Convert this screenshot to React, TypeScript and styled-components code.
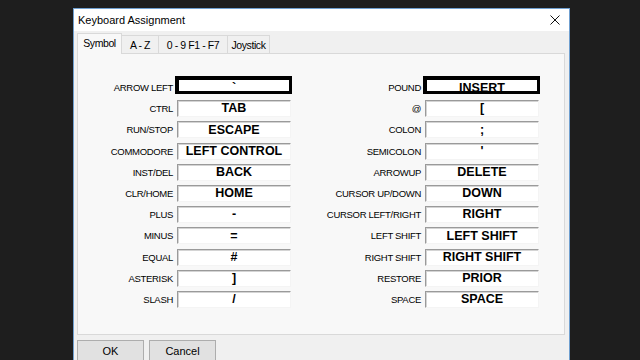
import React from 'react';
import styled, { createGlobalStyle } from 'styled-components';

const Global = createGlobalStyle`
  html, body { margin: 0; padding: 0; background: #1e1e1e; }
  body {
    width: 640px; height: 360px; overflow: hidden;
    font-family: "Liberation Sans", Arial, sans-serif;
  }
`;

const Desktop = styled.div`
  width: 640px;
  height: 360px;
  box-sizing: border-box;
  padding: 8px 0 0 73px;
  overflow: hidden;
  background: #1e1e1e;
`;

const Window = styled.div`
  width: 497px;
  height: 380px;
  box-sizing: border-box;
  border: 1px solid #6f9fd0;
  background: #f0f0f0;
  display: flex;
  flex-direction: column;
`;

const TitleBar = styled.div`
  height: 22px;
  background: #ffffff;
  display: flex;
  align-items: center;
  justify-content: space-between;
  padding-left: 4px;
`;

const Title = styled.span`
  font-size: 11px;
  color: #000;
  white-space: nowrap;
`;

const CloseButton = styled.div`
  width: 28px;
  height: 22px;
  display: flex;
  align-items: center;
  justify-content: center;
`;

const Body = styled.div`
  display: flex;
  flex-direction: column;
  padding: 2px 4px 0 3px;
`;

const TabStrip = styled.div`
  display: flex;
  align-items: flex-end;
  height: 20px;
`;

const Tab = styled.div<{ $active?: boolean; $w: number }>`
  position: relative;
  z-index: ${(p) => (p.$active ? 2 : 1)};
  box-sizing: border-box;
  width: ${(p) => p.$w}px;
  height: ${(p) => (p.$active ? 21 : 18)}px;
  margin-bottom: ${(p) => (p.$active ? -1 : 0)}px;
  margin-left: -1px;
  &:first-child { margin-left: 0; }
  border: 1px solid #d9d9d9;
  border-bottom: none;
  background: ${(p) => (p.$active ? '#f8f8f8' : '#f0f0f0')};
  display: flex;
  align-items: center;
  justify-content: center;
  padding-bottom: ${(p) => (p.$active ? 2 : 0)}px;
  font-size: 10.5px;
  letter-spacing: -0.4px;
  color: #000;
  white-space: nowrap;
`;

const Panel = styled.div`
  position: relative;
  z-index: 1;
  width: 488px;
  height: 282px;
  box-sizing: border-box;
  border: 1px solid #d9d9d9;
  background: #f8f8f8;
  padding-top: 25px;
`;

const Grid = styled.div`
  display: grid;
  grid-template-columns: 99px 114px 134px 114px;
  grid-auto-rows: 17px;
  row-gap: 4.2px;
`;

const Label = styled.div`
  display: flex;
  align-items: center;
  justify-content: flex-end;
  padding-right: 4px;
  font-size: 9.5px;
  letter-spacing: -0.3px;
  color: #000;
  white-space: nowrap;
`;

const ValueBox = styled.div<{ $focused?: boolean }>`
  box-sizing: border-box;
  height: ${(p) => (p.$focused ? 18 : 17)}px;
  align-self: start;
  margin: ${(p) => (p.$focused ? '-3px -1px 0 -2px' : '0')};
  padding-top: ${(p) => (p.$focused ? 5 : 0)}px;
  background: #ffffff;
  border-style: solid;
  border-width: ${(p) => (p.$focused ? '4px 3px 3px 4px' : '1px')};
  border-color: ${(p) => (p.$focused ? '#000' : '#9a9a9a #f4f4f4 #f4f4f4 #9a9a9a')};
  box-shadow: ${(p) => (p.$focused ? 'none' : 'inset 1px 1px 0 #d4d4d4')};
  display: flex;
  align-items: center;
  justify-content: center;
  overflow: hidden;
  font-weight: bold;
  font-size: 12.5px;
  line-height: 1;
  color: #000;
  white-space: nowrap;
`;

const ButtonRow = styled.div`
  display: flex;
  gap: 5px;
  padding-top: 5px;
`;

const Button = styled.div`
  box-sizing: border-box;
  width: 67px;
  height: 22px;
  border: 1px solid #adadad;
  background: #e1e1e1;
  display: flex;
  align-items: center;
  justify-content: center;
  font-size: 11px;
  color: #000;
`;

type Row = [string, string, string, string];

const rows: Row[] = [
  ['ARROW LEFT', '`', 'POUND', 'INSERT'],
  ['CTRL', 'TAB', '@', '['],
  ['RUN/STOP', 'ESCAPE', 'COLON', ';'],
  ['COMMODORE', 'LEFT CONTROL', 'SEMICOLON', "'"],
  ['INST/DEL', 'BACK', 'ARROWUP', 'DELETE'],
  ['CLR/HOME', 'HOME', 'CURSOR UP/DOWN', 'DOWN'],
  ['PLUS', '-', 'CURSOR LEFT/RIGHT', 'RIGHT'],
  ['MINUS', '=', 'LEFT SHIFT', 'LEFT SHIFT'],
  ['EQUAL', '#', 'RIGHT SHIFT', 'RIGHT SHIFT'],
  ['ASTERISK', ']', 'RESTORE', 'PRIOR'],
  ['SLASH', '/', 'SPACE', 'SPACE'],
];

const tabs = [
  { label: 'Symbol', w: 45, active: true },
  { label: 'A - Z', w: 38 },
  { label: '0 - 9 F1 - F7', w: 70 },
  { label: 'Joystick', w: 43 },
];

export default function App() {
  return (
    <>
      <Global />
      <Desktop>
        <Window>
          <TitleBar>
            <Title>Keyboard Assignment</Title>
            <CloseButton>
              <svg width="10" height="10" viewBox="0 0 10 10">
                <path d="M0.5 0.5 L9.5 9.5 M9.5 0.5 L0.5 9.5" stroke="#111" strokeWidth="1" fill="none" />
              </svg>
            </CloseButton>
          </TitleBar>
          <Body>
            <TabStrip>
              {tabs.map((t) => (
                <Tab key={t.label} $w={t.w} $active={t.active}>
                  {t.label}
                </Tab>
              ))}
            </TabStrip>
            <Panel>
              <Grid>
                {rows.map((r, i) => (
                  <React.Fragment key={r[0]}>
                    <Label>{r[0]}</Label>
                    <ValueBox $focused={i === 0}>{r[1]}</ValueBox>
                    <Label>{r[2]}</Label>
                    <ValueBox $focused={i === 0}>{r[3]}</ValueBox>
                  </React.Fragment>
                ))}
              </Grid>
            </Panel>
            <ButtonRow>
              <Button>OK</Button>
              <Button>Cancel</Button>
            </ButtonRow>
          </Body>
        </Window>
      </Desktop>
    </>
  );
}
